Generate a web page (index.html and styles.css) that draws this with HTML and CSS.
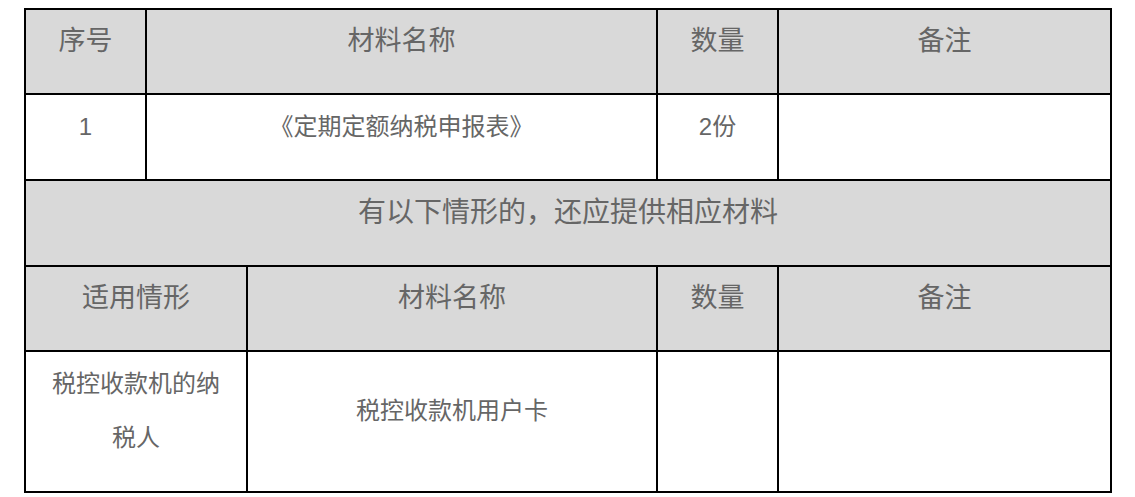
FILE: index.html
```html
<!DOCTYPE html>
<html lang="zh-CN">
<head>
<meta charset="utf-8">
<link rel="stylesheet" href="styles.css">
</head>
<body>
<div class="page">
<table class="materials">
  <colgroup>
    <col class="c1"><col class="c2"><col class="c3"><col class="c4"><col class="c5">
  </colgroup>
  <tr class="head r-head1">
    <th>序号</th>
    <th colspan="2">材料名称</th>
    <th>数量</th>
    <th>备注</th>
  </tr>
  <tr class="r-item">
    <td>1</td>
    <td colspan="2">《定期定额纳税申报表》</td>
    <td>2份</td>
    <td></td>
  </tr>
  <tr class="head r-merge">
    <th colspan="5">有以下情形的，还应提供相应材料</th>
  </tr>
  <tr class="head r-head2">
    <th colspan="2">适用情形</th>
    <th>材料名称</th>
    <th>数量</th>
    <th>备注</th>
  </tr>
  <tr class="r-last">
    <td colspan="2" class="wrap">税控收款机的纳税人</td>
    <td>税控收款机用户卡</td>
    <td></td>
    <td></td>
  </tr>
</table>
</div>
</body>
</html>
```

FILE: styles.css
```css
html, body {
  margin: 0;
  padding: 0;
  background: #fff;
}
.page {
  padding: 8px 0 0 24px;
}
.materials {
  border-collapse: collapse;
  table-layout: fixed;
  width: 1086px;
  font-family: "Liberation Sans", "Noto Sans CJK SC", sans-serif;
  color: #666;
}
.c1 { width: 121px; }
.c2 { width: 101px; }
.c3 { width: 410px; }
.c4 { width: 121px; }
.c5 { width: 333px; }
.materials th,
.materials td {
  border: 2px solid #000;
  text-align: center;
  vertical-align: middle;
  padding: 0 6px 21px;
  box-sizing: border-box;
}
.materials th {
  background: #d9d9d9;
  font-weight: normal;
  font-size: 27px;
  line-height: 40px;
}
.materials td {
  background: #fff;
  font-size: 24px;
  line-height: 54px;
}
.r-head1 { height: 85px; }
.r-item { height: 86px; }
.r-merge { height: 86px; }
.r-head2 { height: 85px; }
.r-last { height: 141px; }
.materials td.wrap {
  padding-left: 24px;
  padding-right: 24px;
}
.materials .r-merge th {
  font-size: 28px;
}
```
